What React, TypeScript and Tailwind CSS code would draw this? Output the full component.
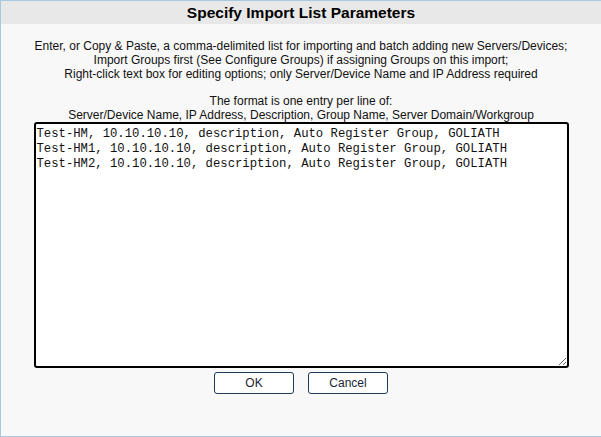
import React from 'react';

const sample = [
  'Test-HM, 10.10.10.10, description, Auto Register Group, GOLIATH',
  'Test-HM1, 10.10.10.10, description, Auto Register Group, GOLIATH',
  'Test-HM2, 10.10.10.10, description, Auto Register Group, GOLIATH',
].join('\n');

export default function App() {
  return (
    <div
      className="w-[601px] h-[437px] flex flex-col bg-[#f8f8f8] border-l border-t border-b border-[#a9c8e2] text-black"
      style={{ fontFamily: '"Liberation Sans", Arial, sans-serif' }}
    >
      <div className="h-[23px] shrink-0 flex items-center justify-center bg-[#e8e8e8]">
        <h1 className="text-[15.5px] font-bold leading-none">Specify Import List Parameters</h1>
      </div>

      <div className="pt-[15px] text-center text-[12px] leading-[14px] text-[#111]">
        <p>Enter, or Copy &amp; Paste, a comma-delimited list for importing and batch adding new Servers/Devices;</p>
        <p>Import Groups first (See Configure Groups) if assigning Groups on this import;</p>
        <p>Right-click text box for editing options; only Server/Device Name and IP Address required</p>
        <p className="mt-[13px]">The format is one entry per line of:</p>
        <p>Server/Device Name, IP Address, Description, Group Name, Server Domain/Workgroup</p>
      </div>

      <textarea
        defaultValue={sample}
        spellCheck={false}
        className="mx-auto block w-[535px] h-[246px] shrink-0 bg-white border-2 border-black rounded-[3px] px-[1px] pt-[3px] pb-[2px] text-[12.25px] leading-[15px] text-[#111] outline-none resize"
        style={{ fontFamily: '"Liberation Mono", "DejaVu Sans Mono", monospace' }}
      />

      <div className="mt-[4px] flex justify-center gap-[14px]">
        <button className="w-[80px] h-[22px] bg-white border border-[#1f3b57] rounded-[3px] text-[12px] text-[#1a2533]">
          OK
        </button>
        <button className="w-[80px] h-[22px] bg-white border border-[#1f3b57] rounded-[3px] text-[12px] text-[#1a2533]">
          Cancel
        </button>
      </div>
    </div>
  );
}
